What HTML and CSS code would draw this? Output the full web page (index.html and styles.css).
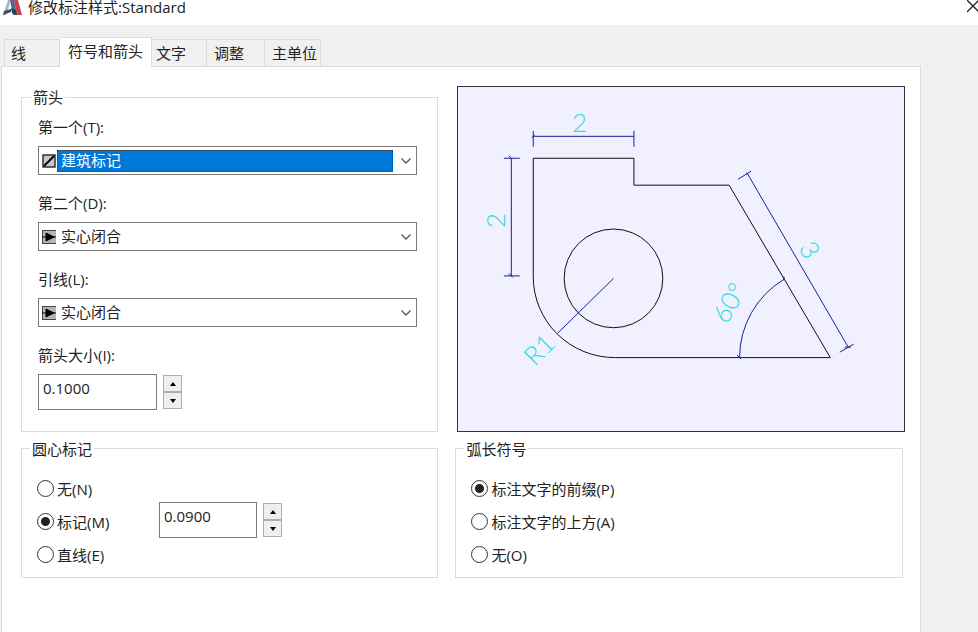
FILE: index.html
```html
<!DOCTYPE html>
<html lang="zh-CN">
<head>
    <meta charset="UTF-8">
    <meta name="viewport" content="width=device-width, initial-scale=1.0">
    <title>修改标注样式:Standard</title>
    <link rel="stylesheet" href="styles.css">
</head>
<body>
<header class="titlebar">
    <svg class="logo" width="20" height="16" viewBox="0 0 20 16" aria-hidden="true">
        <path d="M5 0h3L3 15H0z" fill="#a9b4bf"/>
        <path d="M1 11l7-2v3l-8 3z" fill="#3c4f66"/>
        <path d="M7 0h4l3 15h-4z" fill="#4b6a8c"/>
        <path d="M11 0h4l4 15h-5z" fill="#c8414b"/>
        <path d="M8 8l5 2 1 5-5-2z" fill="#27415f"/>
    </svg>
    <h1>修改标注样式:Standard</h1>
    <button class="close" type="button" aria-label="关闭">
        <svg width="11" height="13" viewBox="0 0 11 13"><path d="M0 0l12 12M0 12L12 0" stroke="#222" stroke-width="1.3"/></svg>
    </button>
</header>

<nav class="tabs">
    <button class="tab tab-line" type="button">线</button>
    <button class="tab active" type="button">符号和箭头</button>
    <button class="tab tab-text" type="button">文字</button>
    <button class="tab" type="button">调整</button>
    <button class="tab tab-unit" type="button">主单位</button>
</nav>

<main class="panel">
    <fieldset class="arrows">
        <legend>箭头</legend>
        <div class="field">
            <label for="first">第一个(T):</label>
            <div class="combo focused">
                <svg class="mark" width="14" height="14" viewBox="0 0 14 14" aria-hidden="true">
                    <rect x="1" y="1" width="12" height="12" fill="#c8c8c8" stroke="#333" stroke-width="1.5"/>
                    <path d="M2 12L12 2" stroke="#000" stroke-width="2"/>
                </svg>
                <select id="first"><option>建筑标记</option><option>实心闭合</option></select>
                <svg class="chevron" width="10" height="6" viewBox="0 0 10 6" aria-hidden="true"><path d="M0.5 0.5L5 5l4.500-4.500"/></svg>
            </div>
        </div>
        <div class="field">
            <label for="second">第二个(D):</label>
            <div class="combo">
                <svg class="mark" width="14" height="14" viewBox="0 0 14 14" aria-hidden="true">
                    <rect x="0" y="0" width="14" height="14" fill="#b4b4b4"/>
                    <path d="M0 0.500h14M0 13.500h14M0.500 0v14" stroke="#444"/>
                    <path d="M0 7h14M4 3l8 4-8 4z" fill="#000" stroke="#000"/>
                </svg>
                <select id="second"><option>实心闭合</option><option>建筑标记</option></select>
                <svg class="chevron" width="10" height="6" viewBox="0 0 10 6" aria-hidden="true"><path d="M0.5 0.5L5 5l4.500-4.500"/></svg>
            </div>
        </div>
        <div class="field">
            <label for="leader">引线(L):</label>
            <div class="combo">
                <svg class="mark" width="14" height="14" viewBox="0 0 14 14" aria-hidden="true">
                    <rect x="0" y="0" width="14" height="14" fill="#b4b4b4"/>
                    <path d="M0 0.500h14M0 13.500h14M0.500 0v14" stroke="#444"/>
                    <path d="M0 7h14M4 3l8 4-8 4z" fill="#000" stroke="#000"/>
                </svg>
                <select id="leader"><option>实心闭合</option><option>建筑标记</option></select>
                <svg class="chevron" width="10" height="6" viewBox="0 0 10 6" aria-hidden="true"><path d="M0.5 0.5L5 5l4.500-4.500"/></svg>
            </div>
        </div>
        <div class="field">
            <label for="size">箭头大小(I):</label>
            <div class="spin spin-wide">
                <input id="size" type="text" value="0.1000">
                <div class="steps">
                    <button type="button" aria-label="增大"><svg width="6" height="4" viewBox="0 0 6 4"><path d="M0 4l3-4 3 4z"/></svg></button>
                    <button type="button" aria-label="减小"><svg width="6" height="4" viewBox="0 0 6 4"><path d="M0 0l3 4 3-4z"/></svg></button>
                </div>
            </div>
        </div>
    </fieldset>

    <div class="preview">
        <svg viewBox="0 0 447 345" role="img" aria-label="标注预览">
            <!-- part outline -->
            <g class="outline">
                <path d="M75.500 190V71.500H176.500V98.500H272L373.500 271.500H158A82 81 0 0 1 75.500 190"/>
                <circle cx="156" cy="192" r="49.500"/>
            </g>
            <!-- dimension lines -->
            <g class="dims">
                <path d="M75.500 49.500H176.500M75.500 44v16M176.500 44v16M74 51l3-3"/>
                <path d="M53.500 71.500V189.500M46 71.500h16M46 189.500h16M51 69l3 3M51 187l4 4"/>
                <path d="M291 88L391.500 261M281 92.500l13-8M383 266l14-8M289 86l3 3M388 261h6"/>
                <path d="M156 192L100 247"/>
                <path d="M327 193A92 92 0 0 0 282.500 271.500M327 190v4M280 269l4 4"/>
            </g>
            <g class="values">
                <text x="122" y="45">2</text>
                <text transform="translate(47 134) rotate(-90)">2</text>
                <text transform="translate(345 168) rotate(60)">3</text>
                <text transform="translate(280 221) rotate(-60)">60°</text>
                <text transform="translate(88 270) rotate(-45)">R1</text>
            </g>
        </svg>
    </div>

    <fieldset class="center-mark">
        <legend>圆心标记</legend>
        <div class="radios">
            <label><input type="radio" name="center">无(N)</label>
            <label><input type="radio" name="center" checked>标记(M)</label>
            <label><input type="radio" name="center">直线(E)</label>
        </div>
        <div class="spin">
            <input type="text" value="0.0900" aria-label="标记大小">
            <div class="steps">
                <button type="button" aria-label="增大"><svg width="6" height="4" viewBox="0 0 6 4"><path d="M0 4l3-4 3 4z"/></svg></button>
                <button type="button" aria-label="减小"><svg width="6" height="4" viewBox="0 0 6 4"><path d="M0 0l3 4 3-4z"/></svg></button>
            </div>
        </div>
    </fieldset>

    <fieldset class="arc-symbol">
        <legend>弧长符号</legend>
        <div class="radios">
            <label><input type="radio" name="arc" checked>标注文字的前缀(P)</label>
            <label><input type="radio" name="arc">标注文字的上方(A)</label>
            <label><input type="radio" name="arc">无(O)</label>
        </div>
    </fieldset>
</main>
</body>
</html>
```
FILE: styles.css
```css
* {
    margin: 0;
    padding: 0;
    box-sizing: border-box;
}
body {
    display: flex;
    flex-direction: column;
    min-height: 100vh;
    background: #f0f0f0;
    color: #222;
    font-family: "Open Sans", "Noto Sans CJK SC", sans-serif;
    font-size: 15px;
    line-height: 22px;
}
button, input, select {
    font: inherit;
    color: inherit;
}

/* title bar */
.titlebar {
    display: flex;
    align-items: flex-start;
    height: 25px;
    padding-left: 3px;
    background: #fff;
}
.titlebar h1 {
    flex: 1;
    margin-left: 5px;
    font-size: 15px;
    font-weight: 400;
    line-height: 14px;
}
.close {
    border: 0;
    background: none;
    line-height: 0;
}

/* tabs */
.tabs {
    display: flex;
    align-items: flex-end;
    padding: 12px 0 0 4px;
}
.tab {
    height: 27px;
    padding: 0 20px 1px 7px;
    border: 1px solid #dcdcdc;
    border-left: 0;
    border-bottom: 0;
    background: #f0f0f0;
    text-align: left;
}
.tab-line {
    padding: 0 33px 1px 6px;
    border-left: 1px solid #dcdcdc;
}
.tab-text {
    padding: 0 20px 1px 4px;
}
.tab-unit {
    padding: 0 3px 1px 7px;
}
.tab.active {
    height: 30px;
    margin-bottom: -1px;
    padding: 0 8px 4px;
    background: #fff;
    z-index: 1;
}

/* page */
.panel {
    flex: 1;
    display: grid;
    grid-template-columns: 13fr 14fr;
    grid-template-rows: auto auto;
    align-content: start;
    gap: 6px 17px;
    margin: 0 57px 0 1px;
    padding: 19px 15px 20px 19px;
    border: 1px solid #dcdcdc;
    border-bottom: 0;
    background: #fff;
}
fieldset {
    min-width: 0;
    padding: 0 15px;
    border: 1px solid #dcdcdc;
}
legend {
    margin-left: -7px;
    padding: 0 2px;
}
.arrows {
    padding: 8px 20px 0 16px;
}
.field {
    margin-bottom: 17px;
}
.field label {
    display: block;
    margin-bottom: 8px;
}

/* drop-downs */
.combo {
    display: flex;
    align-items: center;
    height: 29px;
    padding: 3px;
    border: 1px solid #7a7a7a;
    background: #fff;
}
.combo select {
    flex: 1;
    height: 22px;
    margin-left: 1px;
    padding: 0 4px 2px;
    border: 0;
    outline: 0;
    appearance: none;
    background: #fff;
    line-height: 20px;
}
.combo.focused select {
    background: #0078d7;
    color: #fff;
    outline: 1px dotted #2b3f55;
    outline-offset: -1px;
}
.chevron {
    margin: 0 2px 0 8px;
    fill: none;
    stroke: #555;
    stroke-width: 1.3;
}

/* number boxes */
.spin {
    display: flex;
    align-items: center;
    gap: 6px;
}
.spin input {
    width: 98px;
    height: 36px;
    padding: 0 4px 8px;
    border: 1px solid #7a7a7a;
    outline: 0;
    background: #fff;
}
.spin-wide input {
    width: 119px;
}
.steps {
    display: flex;
    flex-direction: column;
}
.steps button {
    display: flex;
    align-items: center;
    justify-content: center;
    width: 19px;
    height: 17px;
    border: 1px solid #adadad;
    background: #efefef;
}

/* preview */
.preview {
    align-self: start;
    margin-left: 2px;
    border: 1px solid #333;
    background: #f0f0ff;
}
.preview svg {
    display: block;
    width: 100%;
}
.outline {
    fill: none;
    stroke: #111;
}
.dims {
    fill: none;
    stroke: #1c1c9c;
}
.values {
    fill: #2fdcdc;
    font-family: Lato, sans-serif;
    font-size: 26px;
    font-weight: 300;
    text-anchor: middle;
}

/* radio groups */
.center-mark {
    display: flex;
    align-items: center;
}
.center-mark .spin {
    margin-top: 4px;
}
.arc-symbol {
    margin-right: 2px;
}
.radios {
    display: flex;
    flex-direction: column;
    gap: 11px;
    min-width: 122px;
    padding: 18px 0 11px;
}
.radios label {
    display: flex;
    align-items: center;
    gap: 3px;
}
.radios input {
    width: 17px;
    height: 17px;
    border: 1px solid #333;
    border-radius: 50%;
    appearance: none;
    background: #fff;
}
.radios input:checked {
    background: radial-gradient(circle, #222 4px, #fff 5px);
}
```
